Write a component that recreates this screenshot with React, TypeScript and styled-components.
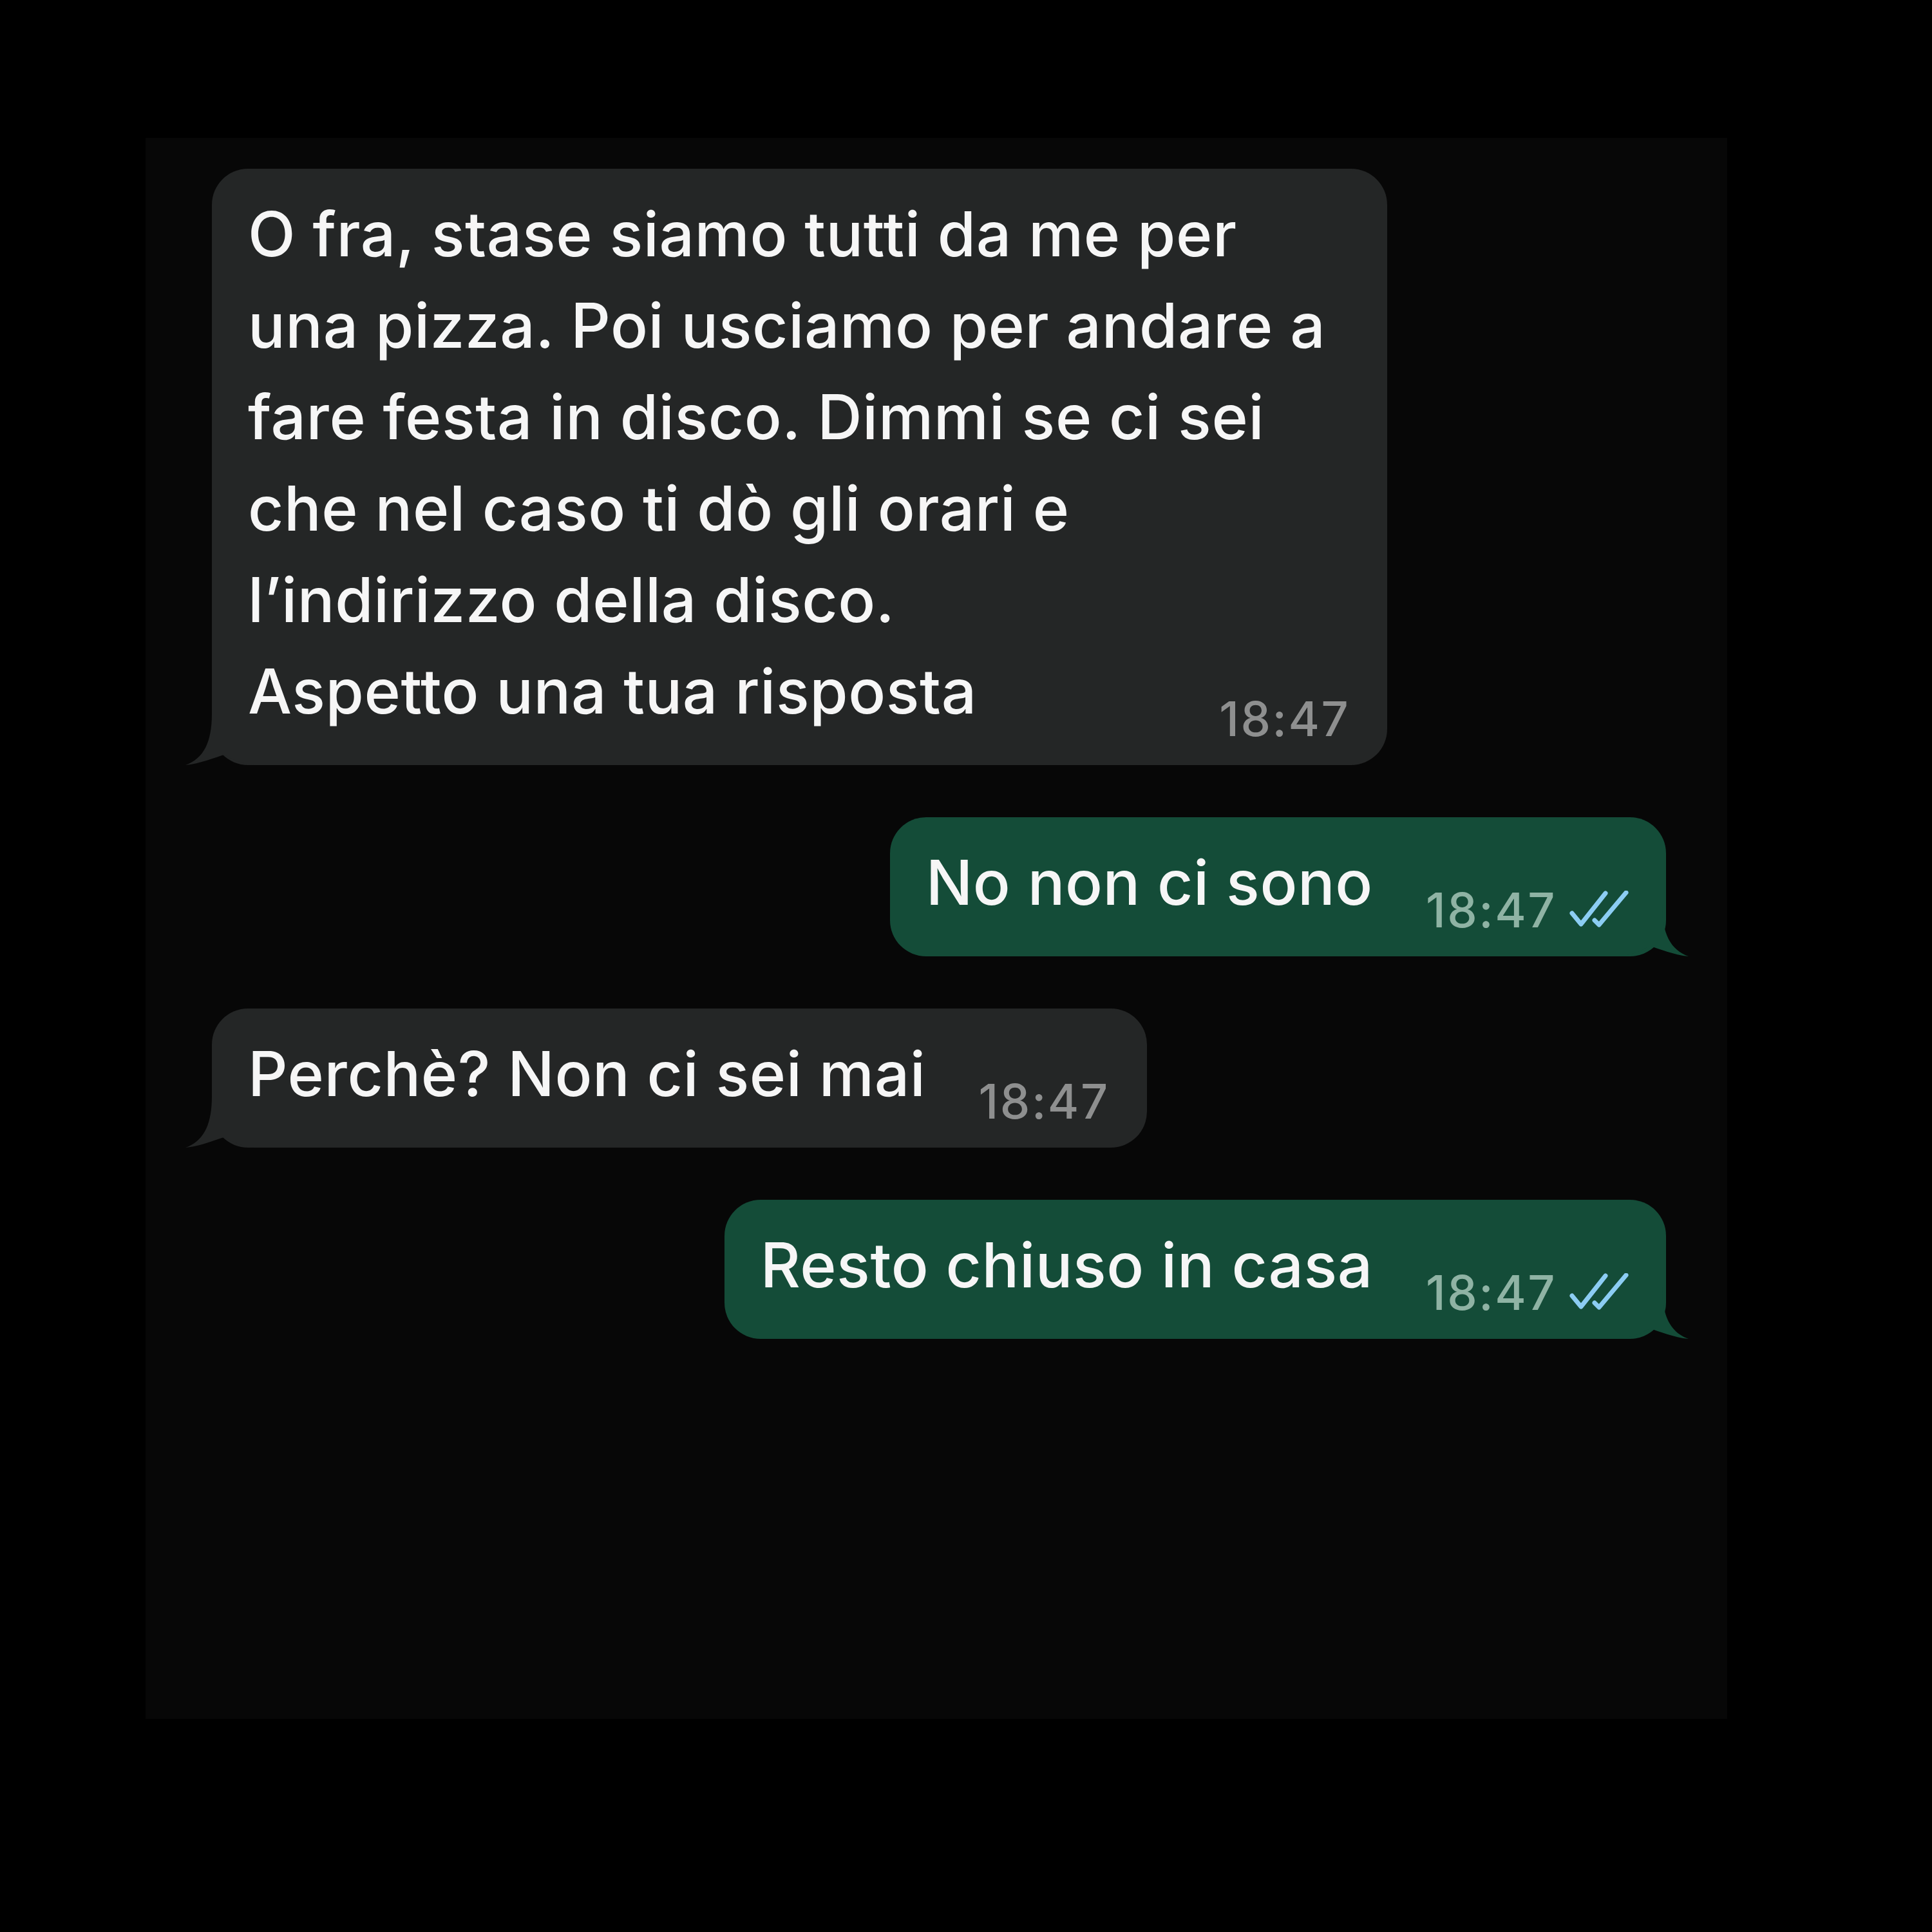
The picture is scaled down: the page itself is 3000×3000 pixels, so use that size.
import React from 'react';
import styled, { createGlobalStyle, css } from 'styled-components';

const GlobalStyle = createGlobalStyle`
  html, body { margin: 0; padding: 0; background: #000; }
  body { font-family: Inter, "Noto Sans", "Liberation Sans", sans-serif; }
`;

const Page = styled.div`
  width: 3000px;
  height: 3000px;
  background: #000;
  box-sizing: border-box;
  padding: 214px 0 0 226px;
`;

const Panel = styled.main`
  width: 2456px;
  height: 2455px;
  background: #070707;
  box-sizing: border-box;
  padding: 48px 95px 0 103px;
  display: flex;
  flex-direction: column;
  gap: 81px;
`;

const Bubble = styled.div<{ $out?: boolean }>`
  position: relative;
  align-self: ${(p) => (p.$out ? 'flex-end' : 'flex-start')};
  background: ${(p) => (p.$out ? '#144c38' : '#242626')};
  border-radius: 56px;
  padding: 30px 58px 35px 56px;
  display: flex;
  flex-direction: column;
`;

const textStyle = css`
  font-size: 96px;
  font-weight: 500;
  letter-spacing: 0.6px;
  line-height: 142px;
  color: #f6f6f6;
`;

const Body = styled.div`
  ${textStyle};
  white-space: pre-line;
  padding-right: 38px;
`;

const LastRow = styled.div`
  display: flex;
  align-items: flex-end;
  justify-content: space-between;
  gap: 82px;
`;

const Line = styled.span`
  ${textStyle};
  margin-bottom: 9px;
  white-space: nowrap;
`;

const Meta = styled.div`
  display: flex;
  align-items: flex-end;
  gap: 20px;
`;

const Time = styled.span<{ $out?: boolean }>`
  font-size: 74px;
  font-weight: 500;
  letter-spacing: 2.5px;
  line-height: 74px;
  color: ${(p) => (p.$out ? '#8fb3a4' : '#8e8f8f')};
`;

const Ticks = styled.svg`
  width: 92px;
  height: 57px;
  margin-bottom: 10px;
`;

const Tail = styled.svg<{ $out?: boolean }>`
  position: absolute;
  bottom: 0;
  width: 110px;
  height: 80px;
  ${(p) =>
    p.$out
      ? css`
          right: -36px;
          transform: scaleX(-1);
        `
      : css`
          left: -42px;
        `}
`;

const DoubleTick = () => (
  <Ticks viewBox="0 0 92 57" fill="none" stroke="#8ccdf3" strokeWidth={7} strokeLinecap="round" strokeLinejoin="round">
    <path d="M4 35 L18 52 L56 4" />
    <path d="M39 46 L46 53 L88 3" />
  </Ticks>
);

const BubbleTail = ({ out }: { out?: boolean }) => (
  <Tail $out={out} viewBox="0 0 110 80">
    <path
      d="M42 0 C42 45 29 70 1 80 C24 78 47 68 61 64 C73 70 88 78 108 80 L108 0 Z"
      fill={out ? '#144c38' : '#242626'}
    />
  </Tail>
);

type Msg = { body?: string; last: string; out?: boolean };

const messages: Msg[] = [
  {
    body:
      'O fra, stase siamo tutti da me per\nuna pizza. Poi usciamo per andare a\nfare festa in disco. Dimmi se ci sei\nche nel caso ti dò gli orari e\nl’indirizzo della disco.',
    last: 'Aspetto una tua risposta',
  },
  { last: 'No non ci sono', out: true },
  { last: 'Perchè? Non ci sei mai' },
  { last: 'Resto chiuso in casa', out: true },
];

export default function App() {
  return (
    <>
      <GlobalStyle />
      <Page>
        <Panel>
          {messages.map((m, i) => (
            <Bubble key={i} $out={m.out}>
              <BubbleTail out={m.out} />
              {m.body && <Body>{m.body}</Body>}
              <LastRow>
                <Line>{m.last}</Line>
                <Meta>
                  <Time $out={m.out}>18:47</Time>
                  {m.out && <DoubleTick />}
                </Meta>
              </LastRow>
            </Bubble>
          ))}
        </Panel>
      </Page>
    </>
  );
}
